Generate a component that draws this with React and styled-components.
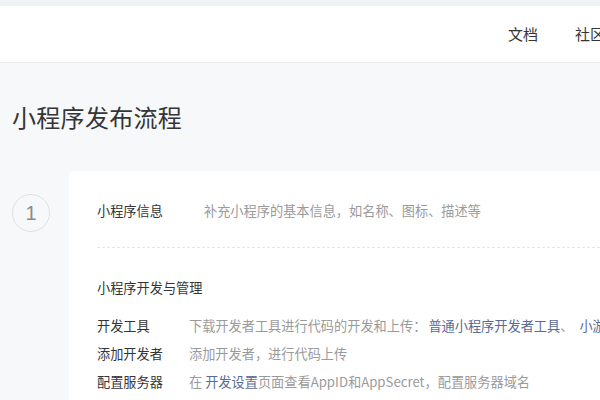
import React from "react"
import styled, { createGlobalStyle } from "styled-components"

const GlobalStyle = createGlobalStyle`
  html, body {
    margin: 0;
    padding: 0;
    background: #f7f8fa;
    overflow: hidden;
  }
  body {
    font-family: "Noto Sans CJK SC", "Noto Sans", sans-serif;
    color: #353535;
  }
`

const Page = styled.div`
  width: 720px;
  min-height: 400px;
  background: #f7f8fa;
  padding-top: 6px;
  box-sizing: border-box;
  background-image: linear-gradient(#f1f2f4, #f1f2f4);
  background-repeat: no-repeat;
  background-size: 100% 6px;
`

const Header = styled.header`
  height: 56px;
  background: #fff;
  border-bottom: 1px solid #ebebeb;
  display: flex;
  align-items: center;
  justify-content: flex-end;
  padding-right: 115px;
`

const Nav = styled.nav`
  display: flex;
  gap: 37px;
  font-size: 15px;
  color: #353535;
`

const NavItem = styled.a`
  color: inherit;
  text-decoration: none;
  line-height: 20px;
`

const Title = styled.h1`
  margin: 38px 0 0 12px;
  font-size: 24px;
  font-weight: 400;
  line-height: 32px;
  color: #353535;
  letter-spacing: 0.3px;
`

const Step = styled.section`
  display: flex;
  align-items: flex-start;
  margin-top: 38px;
  padding-left: 12px;
`

const StepNum = styled.div`
  width: 36px;
  height: 36px;
  margin-top: 23px;
  margin-right: 19px;
  border: 1px solid #e1e1e1;
  border-radius: 50%;
  display: flex;
  align-items: center;
  justify-content: center;
  font-size: 20px;
  color: #8a8a8a;
  flex-shrink: 0;
  font-family: "Liberation Sans", Arial, sans-serif;
`

const Card = styled.div`
  flex: 1;
  background: #fff;
  border-radius: 4px 0 0 0;
  padding: 29px 0 0 28px;
  min-height: 240px;
`

const Block = styled.div`
  padding-bottom: ${p => p.$pb || 0}px;
  border-bottom: ${p => (p.$dashed ? "1px dashed #e7e7e7" : "none")};
  padding-top: ${p => p.$pt || 0}px;
`

const Row = styled.div`
  display: flex;
  font-size: 13.2px;
  line-height: ${p => p.$lh || 28}px;
  white-space: nowrap;
`

const Label = styled.div`
  width: ${p => p.$w}px;
  flex-shrink: 0;
  color: #353535;
`

const Desc = styled.div`
  color: #9a9a9a;
`

const Link = styled.a`
  color: #576b95;
  text-decoration: none;
  margin: ${p => p.$m || "0"};
`

const SubTitle = styled.h3`
  margin: 0 0 13px;
  font-size: 13.2px;
  font-weight: 400;
  line-height: 22px;
  color: #353535;
`

export default function App() {
  return (
    <>
      <GlobalStyle />
      <Page>
        <Header>
          <Nav>
            <NavItem>文档</NavItem>
            <NavItem>社区</NavItem>
          </Nav>
        </Header>
        <Title>小程序发布流程</Title>
        <Step>
          <StepNum>1</StepNum>
          <Card>
            <Block $dashed $pb={25}>
              <Row $lh={22}>
                <Label $w={107}>小程序信息</Label>
                <Desc>补充小程序的基本信息，如名称、图标、描述等</Desc>
              </Row>
            </Block>
            <Block $pt={29}>
              <SubTitle>小程序开发与管理</SubTitle>
              <Row>
                <Label $w={92}>开发工具</Label>
                <Desc>
                  下载开发者工具进行代码的开发和上传：
                  <Link $m="0 0 0 2px">普通小程序开发者工具</Link>、
                  <Link $m="0 0 0 6px">小游戏开发者工具</Link>
                </Desc>
              </Row>
              <Row>
                <Label $w={92}>添加开发者</Label>
                <Desc>添加开发者，进行代码上传</Desc>
              </Row>
              <Row>
                <Label $w={92}>配置服务器</Label>
                <Desc>
                  在 <Link>开发设置</Link>页面查看AppID和AppSecret，配置服务器域名
                </Desc>
              </Row>
            </Block>
          </Card>
        </Step>
      </Page>
    </>
  )
}
